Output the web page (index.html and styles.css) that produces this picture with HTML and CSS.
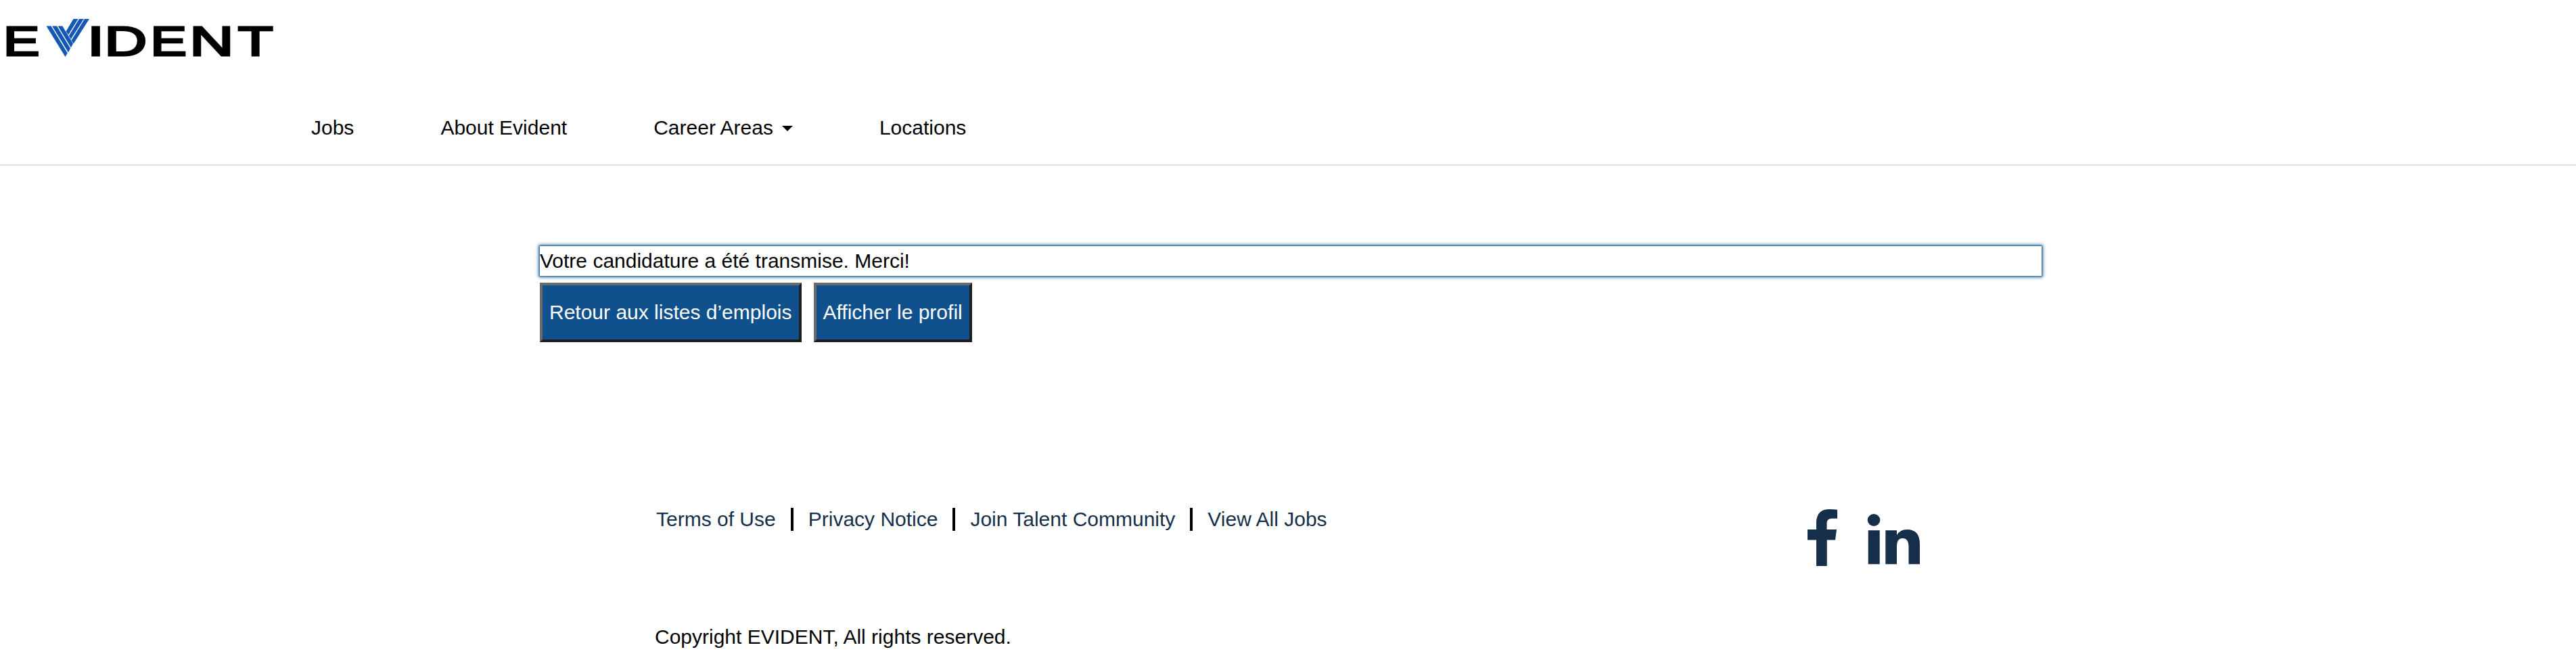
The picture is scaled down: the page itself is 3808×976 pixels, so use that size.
FILE: index.html
```html
<!DOCTYPE html>
<html lang="fr">
<head>
<meta charset="utf-8">
<title>Evident</title>
<link rel="stylesheet" href="styles.css">
</head>
<body>
<header class="header">
  <svg class="logo" width="420" height="110" viewBox="0 0 420 110" role="img" aria-label="Evident">
    <g class="wordmark">
      <text transform="translate(5 82.300) scale(1.3 1)">E</text>
      <text transform="translate(129 82.300) scale(1.47 1)">I</text>
      <text transform="translate(154.500 82.300) scale(1.41 1)">D</text>
      <text transform="translate(222.600 82.300) scale(1.3 1)">E</text>
      <text transform="translate(280.200 82.300) scale(1.47 1)">N</text>
      <text transform="translate(351.800 82.300) scale(1.38 1)">T</text>
    </g>
    <g class="mark">
      <path d="M68.500 38.500h7L99.800 78.500L96.500 84z"/>
      <path d="M77 38.500h7L104 71.500L101 77.500z"/>
      <path d="M85.500 38.500h6.800L108 64.500L105 70.500z"/>
      <path d="M108.500 28h7L101 51.500L97.500 46.500z"/>
      <path d="M117 28h6.800L104.800 58L101.800 53z"/>
      <path d="M125 28h7L108.700 64.500L105.600 59.500z"/>
    </g>
  </svg>
  <nav class="nav">
    <a>Jobs</a>
    <a>About Evident</a>
    <a>Career Areas<span class="caret"></span></a>
    <a>Locations</a>
  </nav>
</header>
<main class="main">
  <div class="message">Votre candidature a été transmise. Merci!</div>
  <div class="actions">
    <button class="btn">Retour aux listes d’emplois</button>
    <button class="btn">Afficher le profil</button>
  </div>
</main>
<footer class="footer">
  <div class="footer-top">
    <div class="links">
      <a>Terms of Use</a><a>Privacy Notice</a><a>Join Talent Community</a><a>View All Jobs</a>
    </div>
    <svg class="social" width="168" height="86" viewBox="0 0 168 86">
      <path d="M13 84V45.500H0V30h13V20C13 7 20 0 32 0q6 0 12 .8v13h-8q-7.500 0-7.500 7V30H43l-2 15.500H28.700V84z"/>
      <ellipse cx="98" cy="16" rx="9.300" ry="9"/>
      <path d="M89.700 31.200h17v50h-17zM115.300 31.200H132v7q5-8.200 15-8.200 19 0 19 22v29.200h-16.500V56q0-13-9-13-8.500 0-8.500 12v26.200h-16.700z"/>
    </svg>
  </div>
  <p class="copyright">Copyright EVIDENT, All rights reserved.</p>
</footer>
</body>
</html>
```
FILE: styles.css
```css
* { box-sizing: border-box; }
body {
  margin: 0;
  background: #fff;
  color: #000;
  font: 30px/42px "Liberation Sans", Arial, sans-serif;
}
.header {
  height: 245px;
  border-bottom: 2px solid #e2e2e2;
}
.logo { display: block; }
.wordmark {
  font: 61.500px "Liberation Sans", Arial, sans-serif;
  stroke: #000;
  stroke-width: 3.600px;
}
.wordmark text { vector-effect: non-scaling-stroke; }
.mark { fill: #1457b5; }
.nav {
  display: flex;
  gap: 128px;
  padding: 58px 0 0 460px;
}
.caret {
  display: inline-block;
  margin-left: 13px;
  vertical-align: 5px;
  border: 8px solid transparent;
  border-top-color: #000;
  border-bottom: 0;
}
.main {
  width: 2220px;
  margin: 119px 0 0 798px;
}
.message {
  height: 44px;
  line-height: 43px;
  box-shadow: 0 0 2px 1px #2a6a9a, 0 0 5px 2px #4a83ab;
}
.actions {
  display: flex;
  gap: 18px;
  margin-top: 10px;
}
.btn {
  height: 88px;
  padding: 0 10px;
  border: 4px solid;
  border-color: #6b6b6b #1e1e1e #1e1e1e #6b6b6b;
  background: #0f508d;
  color: #fff;
  font: inherit;
  white-space: nowrap;
}
.footer { padding: 245px 968px 0; }
.footer-top {
  display: flex;
  justify-content: space-between;
  height: 144px;
}
.links {
  display: flex;
  color: #152e4a;
  padding-left: 2px;
  line-height: 34px;
}
.links a { height: 34px; }
.links a + a {
  margin-left: 22px;
  padding-left: 22px;
  border-left: 4px solid #000;
}
.social {
  margin-top: 2px;
  fill: #152e4a;
}
.copyright { margin: 26px 0 0; }
```
